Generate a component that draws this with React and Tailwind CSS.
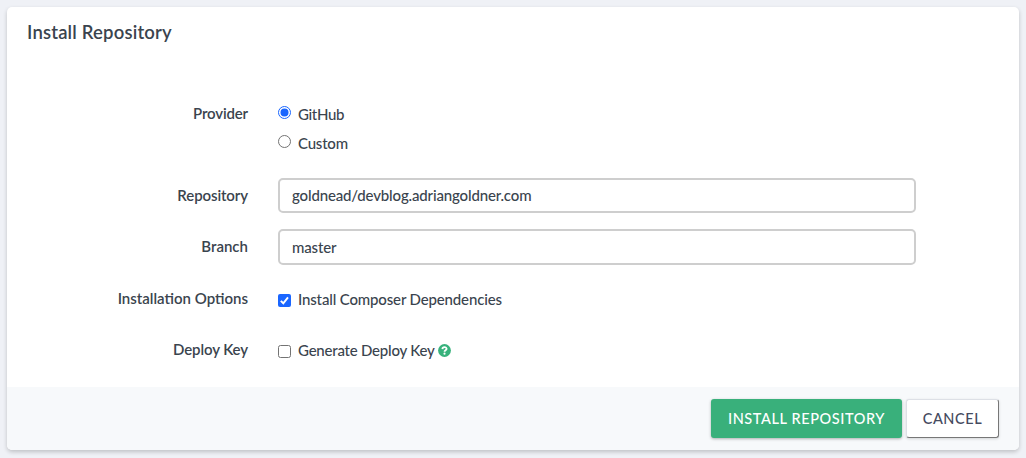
import React from "react";

function Row({ label, className, labelClass, children }) {
  return (
    <div className={`flex ${className}`}>
      <div className={`w-[241px] shrink-0 text-right font-semibold ${labelClass}`}>
        <span className="whitespace-nowrap">{label}</span>
      </div>
      <div className="ml-[30px] w-[638px]">{children}</div>
    </div>
  );
}

function Radio({ checked }) {
  return (
    <svg className="size-[13px] shrink-0" viewBox="0 0 13 13">
      <circle cx="6.5" cy="6.5" r="6" fill="#fff" stroke={checked ? "#1a66ff" : "#737373"} />
      {checked && <circle cx="6.5" cy="6.5" r="4" fill="#1a66ff" />}
    </svg>
  );
}

function Checkbox({ checked }) {
  return (
    <svg className="size-[13px] shrink-0" viewBox="0 0 13 13">
      {checked ? (
        <>
          <rect width="13" height="13" rx="2" fill="#1a66ff" />
          <path d="M2.8 6.9 5.3 9.3 10 3.3" fill="none" stroke="#fff" strokeWidth="1.9" />
        </>
      ) : (
        <rect x=".5" y=".5" width="12" height="12" rx="2" fill="#fff" stroke="#737373" />
      )}
    </svg>
  );
}

function HelpIcon() {
  return (
    <svg className="size-[13px] shrink-0" viewBox="0 0 13 13">
      <circle cx="6.5" cy="6.5" r="6.4" fill="#38b27c" />
      <path d="M4.4 5.1C4.5 2.5 8.7 2.6 8.6 4.9 8.5 6.2 6.5 6.2 6.5 7.7" fill="none" stroke="#fff" strokeWidth="1.8" />
      <circle cx="6.5" cy="9.7" r="1.1" fill="#fff" />
    </svg>
  );
}

export default function App() {
  return (
    <div className="h-[458px] w-[1026px] overflow-hidden bg-[#eff1f6] p-[7px] font-['Lato','Open_Sans',sans-serif] text-[15px] text-[#3a444e]">
      <div className="flex h-[443px] w-[1012px] flex-col overflow-hidden rounded-[5px] bg-white shadow-[0_2px_4px_rgba(0,0,0,0.2)]">
        <h1 className="h-[96px] pl-5 pt-[13px] text-[18.5px] font-semibold leading-6">
          <span className="tracking-[0.18px]">Install Repository</span>
        </h1>
        <Row label="Provider" className="h-[75px]" labelClass="leading-5 tracking-[-0.15px]">
          <div className="flex h-[20px] items-start gap-[7px] font-medium leading-5">
            <div className="pt-[3px]"><Radio checked /></div>
            <span className="mt-px tracking-[-0.35px]">GitHub</span>
          </div>
          <div className="mt-[9px] flex h-[20px] items-start gap-[7px] font-medium leading-5">
            <div className="pt-[3px]"><Radio /></div>
            <span className="mt-px tracking-[-0.2px]">Custom</span>
          </div>
        </Row>
        <Row label="Repository" className="h-[51px]" labelClass="pt-[7px] leading-5 tracking-[-0.1px]">
          <div className="flex h-[35px] items-center rounded-[5px] border-2 border-[#cecece] pl-3 font-medium">
            <span className="tracking-[-0.15px]">goldnead/devblog.adriangoldner.com</span>
          </div>
        </Row>
        <Row label="Branch" className="h-[60px]" labelClass="pt-[7px] leading-5">
          <div className="flex h-[36px] items-center rounded-[5px] border-2 border-[#cecece] pl-3 font-medium">
            <span className="tracking-[-0.15px]">master</span>
          </div>
        </Row>
        <Row label="Installation Options" className="h-[51px]" labelClass="leading-[18px]">
          <div className="flex items-start gap-[7px] font-medium leading-5">
            <div className="pt-[5px]"><Checkbox checked /></div>
            <span className="tracking-[-0.15px]">Install Composer Dependencies</span>
          </div>
        </Row>
        <Row label="Deploy Key" className="h-[47px]" labelClass="leading-[18px] tracking-[-0.1px]">
          <div className="flex items-start gap-[7px] font-medium leading-5">
            <div className="pt-[5px]"><Checkbox /></div>
            <span className="w-[133px] whitespace-nowrap tracking-[-0.22px]">Generate Deploy Key</span>
            <div className="pt-[4px]"><HelpIcon /></div>
          </div>
        </Row>
        <div className="flex h-[63px] justify-end gap-1 bg-[#f7f9fb] pr-5 pt-3 text-[14.5px] font-medium">
          <button className="h-[39px] w-[191px] rounded-[3px] bg-[#39b07b] text-white shadow-[0_1px_3px_rgba(0,0,0,0.3)]">
            <span className="tracking-[0.6px]">INSTALL REPOSITORY</span>
          </button>
          <button className="h-[39px] w-[93px] rounded-[3px] border border-b-[#777] border-l-[#dde0e6] border-r-[#777] border-t-[#dde0e6] bg-white text-[#454b60] shadow-[0_1px_3px_rgba(0,0,0,0.15)]">
            <span className="tracking-[0.6px]">CANCEL</span>
          </button>
        </div>
      </div>
    </div>
  );
}
